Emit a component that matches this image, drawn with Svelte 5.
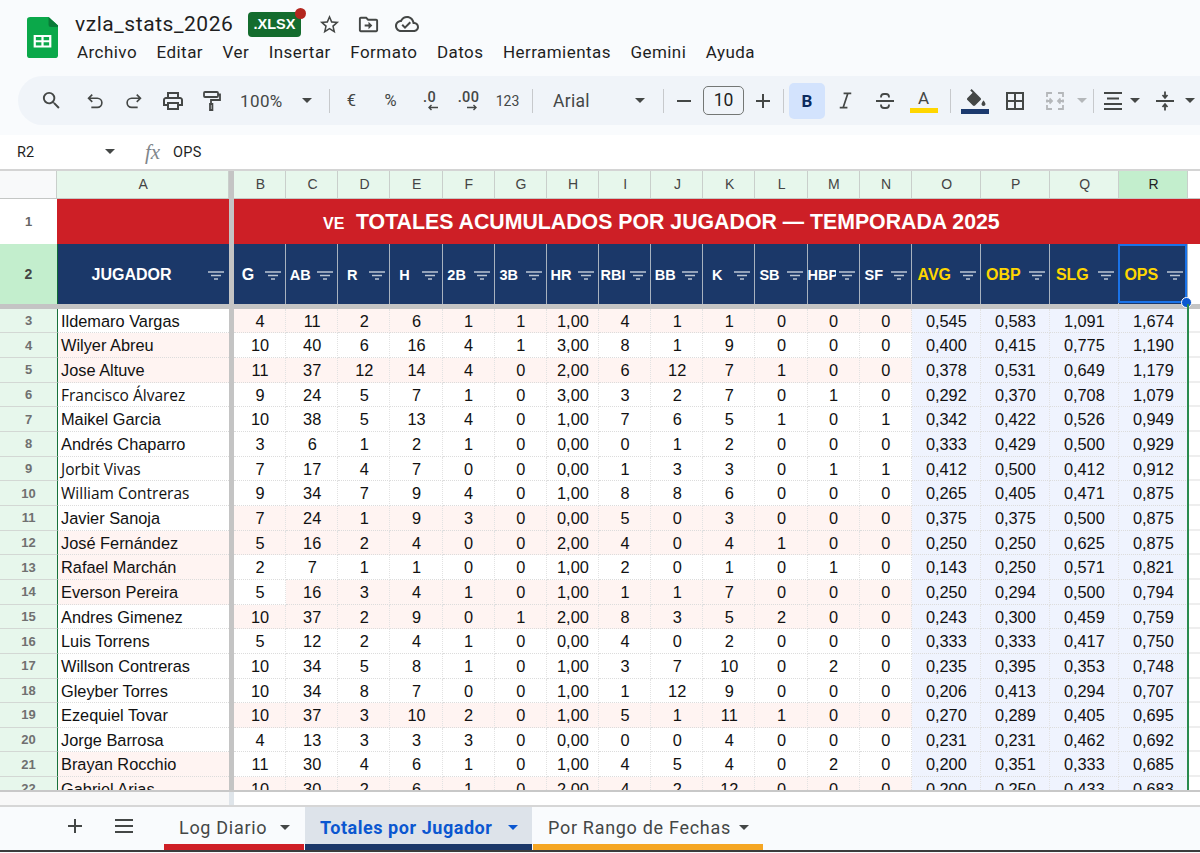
<script>
  const menus = ['Archivo','Editar','Ver','Insertar','Formato','Datos','Herramientas','Gemini','Ayuda'];
  const cols = ['B','C','D','E','F','G','H','I','J','K','L','M','N','O','P','Q','R'];
  const heads = ['G','AB','R','H','2B','3B','HR','RBI','BB','K','SB','HBP','SF','AVG','OBP','SLG','OPS'];
  const raw = [
    'Ildemaro Vargas|4 11 2 6 1 1 1,00 4 1 1 0 0 0 0,545 0,583 1,091 1,674',
    'Wilyer Abreu|10 40 6 16 4 1 3,00 8 1 9 0 0 0 0,400 0,415 0,775 1,190',
    'Jose Altuve|11 37 12 14 4 0 2,00 6 12 7 1 0 0 0,378 0,531 0,649 1,179',
    'Francisco Álvarez|9 24 5 7 1 0 3,00 3 2 7 0 1 0 0,292 0,370 0,708 1,079',
    'Maikel Garcia|10 38 5 13 4 0 1,00 7 6 5 1 0 1 0,342 0,422 0,526 0,949',
    'Andrés Chaparro|3 6 1 2 1 0 0,00 0 1 2 0 0 0 0,333 0,429 0,500 0,929',
    'Jorbit Vivas|7 17 4 7 0 0 0,00 1 3 3 0 1 1 0,412 0,500 0,412 0,912',
    'William Contreras|9 34 7 9 4 0 1,00 8 8 6 0 0 0 0,265 0,405 0,471 0,875',
    'Javier Sanoja|7 24 1 9 3 0 0,00 5 0 3 0 0 0 0,375 0,375 0,500 0,875',
    'José Fernández|5 16 2 4 0 0 2,00 4 0 4 1 0 0 0,250 0,250 0,625 0,875',
    'Rafael Marchán|2 7 1 1 0 0 1,00 2 0 1 0 1 0 0,143 0,250 0,571 0,821',
    'Everson Pereira|5 16 3 4 1 0 1,00 1 1 7 0 0 0 0,250 0,294 0,500 0,794',
    'Andres Gimenez|10 37 2 9 0 1 2,00 8 3 5 2 0 0 0,243 0,300 0,459 0,759',
    'Luis Torrens|5 12 2 4 1 0 0,00 4 0 2 0 0 0 0,333 0,333 0,417 0,750',
    'Willson Contreras|10 34 5 8 1 0 1,00 3 7 10 0 2 0 0,235 0,395 0,353 0,748',
    'Gleyber Torres|10 34 8 7 0 0 1,00 1 12 9 0 0 0 0,206 0,413 0,294 0,707',
    'Ezequiel Tovar|10 37 3 10 2 0 1,00 5 1 11 1 0 0 0,270 0,289 0,405 0,695',
    'Jorge Barrosa|4 13 3 3 3 0 0,00 0 0 4 0 0 0 0,231 0,231 0,462 0,692',
    'Brayan Rocchio|11 30 4 6 1 0 1,00 4 5 4 0 2 0 0,200 0,351 0,333 0,685',
    'Gabriel Arias|10 30 2 6 1 0 2,00 4 2 12 0 0 0 0,200 0,250 0,433 0,683'
  ];
  const namePink = [4,5,12,13,14,21,22];
  const bodyPink = [3,5,11,12,15,19,22];
  const altFont = [6,9,10];
  const rows = raw.map((r, i) => {
    const [name, nums] = r.split('|');
    const n = i + 3;
    return { n, name, vals: nums.split(' '), np: namePink.includes(n), bp: bodyPink.includes(n), alt: altFont.includes(n) };
  });
</script>

<div class="page">
  <header class="top">
    <svg class="logo" viewBox="0 0 28 43" width="31" height="41" preserveAspectRatio="none">
      <path d="M3 0h16.500L28 9v31a3 3 0 0 1-3 3H3a3 3 0 0 1-3-3V3a3 3 0 0 1 3-3z" fill="#0ba84a"/>
      <path d="M19.500 0L28 9v1.500h-6.500a2 2 0 0 1-2-2z" fill="#0a7a38"/>
      <path d="M6 19h16v13H6zm2 2v3.500h5V21zm7 0v3.500h5V21zm-7 5.500V30h5v-3.500zm7 0V30h5v-3.500z" fill="#fff" fill-rule="evenodd"/>
    </svg>
    <div class="titles">
      <div class="titleline">
        <span class="docname">vzla_stats_2026</span>
        <span class="badge">.XLSX<i class="dot"></i></span>
        <svg class="ti star" viewBox="0 0 24 24" width="23" height="23"><path d="M22 9.240l-7.190-.62L12 2 9.190 8.630 2 9.240l5.460 4.730L5.820 21 12 17.270 18.180 21l-1.630-7.030L22 9.240zM12 15.400l-3.760 2.270 1-4.280-3.320-2.880 4.380-.38L12 6.100l1.710 4.040 4.380.38-3.320 2.880 1 4.280L12 15.400z"/></svg>
        <svg class="ti move" viewBox="0 0 24 24" width="23" height="23"><path d="M20 6h-8l-2-2H4c-1.100 0-2 .9-2 2v12c0 1.100.9 2 2 2h16c1.100 0 2-.9 2-2V8c0-1.100-.9-2-2-2zm0 12H4V6h5.170l2 2H20v10zm-8-1l4-4-4-4v3H8v2h4v3z"/></svg>
        <svg class="ti cloud" viewBox="0 0 24 24" width="24" height="24"><path d="M19.350 10.040C18.670 6.590 15.640 4 12 4 9.110 4 6.600 5.640 5.350 8.040 2.340 8.360 0 10.910 0 14c0 3.310 2.690 6 6 6h13c2.760 0 5-2.240 5-5 0-2.640-2.050-4.780-4.650-4.960zM19 18H6c-2.210 0-4-1.790-4-4 0-2.050 1.530-3.760 3.560-3.970l1.070-.11.5-.95C8.080 7.140 9.940 6 12 6c2.620 0 4.880 1.860 5.390 4.430l.3 1.500 1.530.11c1.560.1 2.780 1.410 2.780 2.960 0 1.650-1.350 3-3 3zm-9-3.820l-2.090-2.090L6.500 13.500 10 17l6.010-6.010-1.410-1.410z"/></svg>
      </div>
      <nav class="menu">
        {#each menus as m}<span>{m}</span>{/each}
      </nav>
    </div>
  </header>

  <div class="tbwrap">
    <div class="tb">
      <span class="t"><svg viewBox="0 0 24 24" width="23" height="23"><path d="M15.500 14h-.79l-.28-.27A6.471 6.471 0 0 0 16 9.500 6.500 6.500 0 1 0 9.500 16c1.610 0 3.090-.59 4.230-1.570l.27.28v.79l5 4.990L20.490 19l-4.990-5zm-6 0C7.010 14 5 11.990 5 9.500S7.010 5 9.500 5 14 7.010 14 9.500 11.990 14 9.500 14z"/></svg></span>
      <span class="t ml4"><svg class="ln" viewBox="0 0 24 24" width="22" height="22"><path d="M9 5L5 9l4 4M5 9h9.500a5 5 0 0 1 0 10H8"/></svg></span>
      <span class="t"><svg class="ln" viewBox="0 0 24 24" width="22" height="22"><path d="M15 5l4 4-4 4M19 9H9.500a5 5 0 0 0 0 10H16"/></svg></span>
      <span class="t"><svg viewBox="0 0 24 24" width="24" height="24"><path d="M19 8h-1V3H6v5H5c-1.660 0-3 1.340-3 3v6h4v4h12v-4h4v-6c0-1.660-1.340-3-3-3zM8 5h8v3H8V5zm8 14H8v-4h8v4zm2-4v-2H6v2H4v-4c0-.55.45-1 1-1h14c.55 0 1 .45 1 1v4h-2z"/></svg></span>
      <span class="t mlm1"><svg class="ln" viewBox="0 0 24 24" width="24" height="24"><path d="M6 3h12a1 1 0 0 1 1 1v3a1 1 0 0 1-1 1H6a1 1 0 0 1-1-1V4a1 1 0 0 1 1-1zM19 5.500h2V11h-9v3.500M11 15h2.400v6H11z"/></svg></span>
      <span class="zoomtxt">100%</span>
      <span class="car c34"></span>
      <span class="sep ml5"></span>
      <span class="t ml2 sym">€</span>
      <span class="t sym">%</span>
      <span class="t dec"><b>.0</b><svg viewBox="0 0 12 7" width="12" height="7"><path class="arr" d="M11 3.500H2M4.500 1L2 3.500 4.500 6"/></svg></span>
      <span class="t dec"><b>.00</b><svg viewBox="0 0 12 7" width="12" height="7"><path class="arr" d="M1 3.500h9M7.500 1L10 3.500 7.500 6"/></svg></span>
      <span class="t num123">123</span>
      <span class="sep ml5"></span>
      <span class="fontname">Arial</span>
      <span class="car c34"></span>
      <span class="sep ml6"></span>
      <span class="t"><i class="minus"></i></span>
      <span class="sizebox">10</span>
      <span class="t w38"><svg class="ln2" viewBox="0 0 24 24" width="24" height="24"><path d="M12 5v14M5 12h14"/></svg></span>
      <span class="sep ml1"></span>
      <span class="bold">B</span>
      <span class="t w40"><svg class="ln" viewBox="0 0 24 24" width="23" height="23"><path d="M10 4.500h8M6 19.500h8M14.500 4.500l-5 15"/></svg></span>
      <span class="t"><svg class="ln" viewBox="0 0 24 24" width="24" height="24"><path d="M3 12h18M8 8.500V8a3 3 0 0 1 3-3h2a3 3 0 0 1 3 3v.5M8 15.500V16a3 3 0 0 0 3 3h2a3 3 0 0 0 3-3v-.5"/></svg></span>
      <span class="t textcolor"><em>A</em><i></i></span>
      <span class="sep ml7"></span>
      <span class="t w49 fill"><svg viewBox="0 0 24 20" width="24" height="20"><path d="M16.560 10.940L7.620 2 6.210 3.410l2.380 2.380-5.150 5.150c-.59.59-.59 1.540 0 2.120l5.500 5.500c.29.29.68.44 1.060.44s.77-.15 1.060-.44l5.500-5.500c.59-.58.59-1.530 0-2.120zM19.500 13.500s-2 2.170-2 3.500c0 1.100.9 2 2 2s2-.9 2-2c0-1.330-2-3.500-2-3.500z"/></svg><i></i></span>
      <span class="t w30"><svg class="ln2" viewBox="0 0 24 24" width="24" height="24"><path d="M4 4h16v16H4zM12 4v16M4 12h16"/></svg></span>
      <span class="t w40 ml5"><svg class="ln off" viewBox="0 0 24 24" width="24" height="24"><path d="M9 4H4v4M15 4h5v4M9 20H4v-4M15 20h5v-4M4 10.500v3M20 10.500v3M3 12h6M6.500 9.500L9 12l-2.500 2.500M21 12h-6M17.500 9.500L15 12l2.500 2.500"/></svg></span>
      <span class="car off w14"></span>
      <span class="sep ml4"></span>
      <span class="t w38"><svg class="ln" viewBox="0 0 24 24" width="24" height="24"><path d="M3 4h18M6 9.500h12M3 15h18M3 20h18"/></svg></span>
      <span class="car w14 mlm4"></span>
      <span class="t w38 ml4"><svg class="ln" viewBox="0 0 24 24" width="24" height="24"><path d="M3 12h18M12 2.500v6M9.500 6l2.500 2.800L14.500 6M12 21.500v-6M9.500 18l2.500-2.800 2.500 2.800"/></svg></span>
      <span class="car w14 mlm1"></span>
    </div>
  </div>

  <div class="formula">
    <span class="cellref">R2</span>
    <span class="car fcar"></span>
    <span class="fx">fx</span>
    <span class="ftext">OPS</span>
  </div>

  <section class="sheet">
    <div class="row colhead">
      <div class="corner"></div>
      <div class="ch">A</div>
      <div class="bar"></div>
      {#each cols as c}<div class="ch" class:active={c === 'R'}>{c}</div>{/each}
    </div>
    <div class="row r1">
      <div class="rl">1</div>
      <div class="red"></div>
      <div class="bar"></div>
      <div class="red title"><small>VE</small><span>TOTALES ACUMULADOS POR JUGADOR — TEMPORADA 2025</span></div>
    </div>
    <div class="row r2">
      <div class="rl on">2</div>
      <div class="hd first">
        <span>JUGADOR</span>
        <svg viewBox="0 0 16 9" width="16" height="9"><path d="M0 1h16M3 4.500h10M6 8h4"/></svg>
      </div>
      <div class="bar"></div>
      {#each heads as h, i}
        <div class="hd" class:gold={i > 12} class:big={h === 'G' || i > 12}>
          <span>{h}</span>
          <svg viewBox="0 0 16 9" width="16" height="9"><path d="M0 1h16M3 4.500h10M6 8h4"/></svg>
        </div>
      {/each}
    </div>
    <div class="band"></div>
    {#each rows as r}
      <div class="row data">
        <div class="rl small">{r.n}</div>
        <div class="nm" class:pink={r.np} class:alt={r.alt}>{r.name}</div>
        <div class="bar"></div>
        {#each r.vals as v, i}
          <div class="v" class:pink={i < 13 && (r.bp || (r.n === 14 && i > 0))} class:lav={i >= 13}>{v}</div>
        {/each}
        <div class="rest"></div>
      </div>
    {/each}
    <div class="sel"><i></i></div>
    <div class="greenline"></div>
  </section>

  <div class="hscroll"><div class="sl"></div><div class="sb"></div></div>

  <footer class="tabs">
    <span class="addsheet"><svg class="ln2" viewBox="0 0 24 24" width="24" height="24"><path d="M12 5v14M5 12h14"/></svg></span>
    <span class="allsheets"><svg class="ln2" viewBox="0 0 24 24" width="24" height="24"><path d="M3 6h18M3 12h18M3 18h18"/></svg></span>
    <div class="tab t1"><span>Log Diario</span><i class="car"></i></div>
    <div class="tab t2 current"><span>Totales por Jugador</span><i class="car"></i></div>
    <div class="tab t3"><span>Por Rango de Fechas</span><i class="car"></i></div>
  </footer>
</div>

<style>
  :global(body) { margin: 0; background: #fff; }
  .page {
    width: 1200px; height: 853px; overflow: hidden; display: flex; flex-direction: column;
    font-family: "Liberation Sans", Arial, sans-serif; color: #111; background: #f9fbfd;
  }
  .top { height: 76px; flex: none; display: flex; box-sizing: border-box; padding: 17px 0 0 27px; }
  .logo { flex: none; }
  .titles { margin-left: 17px; margin-top: -6px; }
  .titleline { display: flex; align-items: center; height: 26px; }
  .docname { font: 21px/26px Roboto, sans-serif; letter-spacing: .55px; color: #1f1f1f; width: 173px; flex: none; }
  .badge {
    position: relative; flex: none; width: 53px; height: 25px; border-radius: 4px; background: #146c2e; color: #fff;
    font: 700 14.500px/25px "Liberation Sans", sans-serif; text-align: center;
  }
  .dot { position: absolute; right: -5px; top: -4px; width: 11px; height: 11px; border-radius: 50%; background: #b3261e; }
  .ti { fill: #444746; flex: none; }
  .star { margin-left: 17px; }
  .move { margin-left: 16px; }
  .cloud { margin-left: 15px; }
  .menu { display: flex; gap: 19.500px; margin: 3px 0 0 2px; font: 17px/24px Roboto, sans-serif; letter-spacing: .45px; color: #1f1f1f; }
  .tbwrap { height: 59px; flex: none; box-sizing: border-box; padding-left: 18px; background: #f9fbfd; }
  .tb {
    height: 49px; width: 1200px; display: flex; align-items: center; background: #f0f4f9; border-radius: 25px 0 0 25px;
    padding-left: 14px; color: #444746; font-family: Roboto, sans-serif;
  }
  .tb svg { fill: #444746; }
  .t { flex: none; width: 39px; height: 36px; display: flex; align-items: center; justify-content: center; }
  .ln, .ln2 { fill: none !important; stroke: #444746; stroke-width: 1.800; }
  .ln2 { stroke-width: 2; }
  .ln.off { stroke: #b4b7ba; }
  .w38 { width: 38px; } .w40 { width: 40px; } .w49 { width: 49px; } .w30 { width: 30px; } .w14 { width: 14px; }
  .ml1 { margin-left: 1px; } .ml2 { margin-left: 2px; } .ml4 { margin-left: 4px; } .ml5 { margin-left: 5px; } .ml6 { margin-left: 6px; } .ml7 { margin-left: 7px; }
  .mlm1 { margin-left: -1px; } .mlm4 { margin-left: -4px; }
  .zoomtxt { flex: none; width: 60px; box-sizing: border-box; padding-left: 10px; font-size: 17px; letter-spacing: .4px; }
  .car { display: block; position: relative; flex: none; height: 0; }
  .car::after {
    content: ""; position: absolute; left: 50%; top: -3px; margin-left: -5px;
    border-left: 5px solid transparent; border-right: 5px solid transparent; border-top: 5px solid #444746;
  }
  .car.off::after { border-top-color: #b4b7ba; }
  .c34 { width: 34px; }
  .sep { flex: none; width: 1px; height: 24px; background: #c7c9cc; }
  .sym { font-size: 16.500px; }
  .dec { flex-direction: column; line-height: 1; }
  .dec b { font-weight: 500; font-size: 14.500px; height: 14px; letter-spacing: .3px; }
  .dec svg { margin-top: -1px; margin-left: 6px; }
  .arr { fill: none; stroke: #444746; stroke-width: 1.400; }
  .num123 { font-size: 14px; }
  .fontname { flex: none; width: 90px; box-sizing: border-box; padding-left: 20px; font-size: 17.500px; letter-spacing: .3px; }
  .minus { display: block; width: 14px; height: 2px; background: #444746; }
  .sizebox {
    flex: none; box-sizing: border-box; width: 41px; height: 29px; border: 1px solid #747775; border-radius: 5px;
    text-align: center; font-size: 17.500px; line-height: 27px; color: #1f1f1f;
  }
  .bold {
    flex: none; width: 36px; height: 36px; margin-left: 5px; border-radius: 5px; background: #d3e3fd; color: #0b2a5e;
    font: 700 17px/36px Roboto, sans-serif; text-align: center;
  }
  .textcolor { flex-direction: column; }
  .textcolor em { font: 17px/20px Roboto, sans-serif; color: #444746; }
  .textcolor i { display: block; width: 28px; height: 5px; background: #ffd600; }
  .fill { flex-direction: column; }
  .fill i { display: block; width: 28px; height: 5px; background: #1c3a6e; margin-top: 2px; margin-right: 2px; }

  .formula { height: 34px; flex: none; display: flex; align-items: center; background: #fff; font-family: Roboto, sans-serif; font-size: 14.500px; color: #1f1f1f; }
  .cellref { flex: none; width: 88px; padding-left: 17px; box-sizing: content-box; }
  .fcar { width: 10px; margin-right: 30px; }
  .fx { font: italic 21px/24px "Liberation Serif", serif; color: #80868b; width: 28px; flex: none; }
  .ftext { letter-spacing: .3px; }

  .sheet { position: relative; height: 621px; flex: none; overflow: hidden; background: #fff; }
  .row {
    display: grid;
    grid-template-columns: 57px 172px 5px repeat(13, 52.154px) repeat(4, 69px) 1fr;
  }
  .colhead { height: 30px; box-sizing: border-box; border-top: 2px solid #d4d4d4; border-bottom: 1.500px solid #c4c7c5; }
  .corner { background: #f8f9fa; border-right: 1.500px solid #c9cfcb; }
  .ch {
    background: #e7f7ec; border-right: 1.500px solid #c9cfcb; padding-left: 1.500px; text-align: center; font-size: 14px; line-height: 27px; color: #444;
  }
  .ch.active { background: #c3eecd; color: #222; }
  .bar { background: #c4c4c4; }
  .rl { background: #fff; display: flex; align-items: center; justify-content: center; font-size: 13px; font-weight: 700; color: #666; }
  .rl.on { background: #c3eecd; color: #444; font-size: 14px; }
  .rl.small { background: #e7f7ec; border-bottom: 1.500px solid #d3d8d4; font-weight: 700; color: #707070; font-size: 13px; box-sizing: border-box; }
  .r1 { height: 45px; }
  .red { background: #cd1f26; }
  .title {
    grid-column: 4 / -1; display: flex; align-items: center; color: #fff; font-weight: 700; font-size: 21.300px; padding: 2px 0 0 89px;
  }
  .title small { font-size: 16px; width: 33px; padding-top: 2px; }
  .r2 { height: 60px; }
  .hd {
    background: #1b3869; border-right: 1.500px solid #a8b2bf; display: flex; align-items: center; color: #fff; font-weight: 700;
    font-size: 14.500px; padding: 1px 4px 0 0; overflow: hidden; min-width: 0; white-space: nowrap; box-sizing: border-box;
  }
  .hd span { flex: 1; min-width: 0; text-align: center; overflow: hidden; margin-right: 3px; }
  .hd svg { flex: none; fill: none; stroke: #bcc5d3; stroke-width: 1.400; margin-top: 1px; }
  .hd.first { font-size: 16px; border-left: 1.500px solid #0f6b36; padding-right: 5px; border-right: 0; }
  .hd.big { font-size: 16px; }
  .hd.gold { color: #ffd600; }
  .band { height: 4.670px; background: #c4c4c4; }
  .data { height: 24.670px; }
  .nm, .v { background: #fff; border-right: 1px dotted #e2e2e2; border-bottom: 1px dotted #dcdcdc; box-sizing: border-box; white-space: nowrap; overflow: hidden; font-size: 16.350px; line-height: 24.500px; color: #111; }
  .nm { border-left: 1.500px solid #17713b; padding-left: 3px; border-right: 0; }
  .nm.alt { font-family: "Open Sans", sans-serif; font-size: 15.500px; }
  .v { text-align: center; padding-left: 1px; }
  .pink { background: #fff4f2; }
  .lav { background: #eff3fe; }
  .rest { border-bottom: 2px solid #eeeeee; box-sizing: border-box; }
  .sel {
    position: absolute; left: 1118px; top: 75px; width: 69px; height: 59px; box-sizing: border-box; border: 2px solid #1a73e8; pointer-events: none;
  }
  .sel i { position: absolute; right: -7px; bottom: -7px; width: 9px; height: 9px; border-radius: 50%; background: #0b57d0; border: 1.500px solid #fff; }
  .greenline { position: absolute; left: 1187px; top: 135px; bottom: 0; width: 1.500px; background: #2a8a4f; }

  .hscroll { height: 15px; flex: none; display: flex; background: #fff; box-sizing: border-box; border-top: 2px solid #c8c8c8; }
  .sl { width: 229px; background: #f8f8f8; }
  .sb { width: 5px; background: #dfe5ea; }

  .tabs {
    position: relative; height: 47px; flex: none; box-sizing: border-box; border-top: 2px solid #d6d6d6; border-bottom: 2px solid #3c3c3c;
    background: #f9fbfd; display: flex; font-family: Roboto, sans-serif; font-weight: 400; font-size: 18px; letter-spacing: .7px; color: #444746;
  }
  .addsheet, .allsheets { flex: none; display: flex; align-items: center; height: 38px; }
  .addsheet { margin-left: 63px; }
  .allsheets { margin-left: 25px; margin-right: 28px; }
  .tab { flex: none; box-sizing: border-box; height: 43px; display: flex; align-items: center; border-bottom: 6px solid; padding: 4px 0 0 15px; margin-right: 1px; }
  .tab .car { margin-left: auto; margin-right: 19px; }
  .tab span { white-space: nowrap; }
  .t1 { width: 140px; border-color: #cf1f26; }
  .t2 { width: 227px; border-color: #1b3869; background: #dde3ea; color: #0b57d0; font-weight: 700; letter-spacing: .55px; }
  .t2 .car::after { border-top-color: #0b57d0; }
  .t3 { width: 230px; border-color: #f5a623; }
</style>
